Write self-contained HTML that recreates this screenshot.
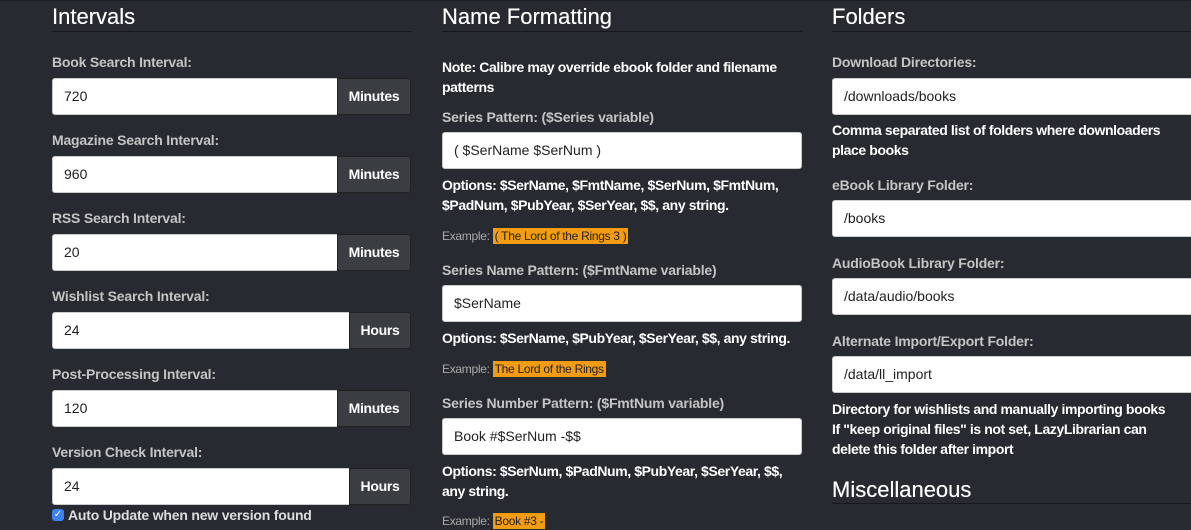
<!DOCTYPE html>
<html><head><style>
body{margin:0;width:1191px;height:526px;overflow:hidden;background:#272a30;font-family:"Liberation Sans",sans-serif;position:relative}
.a{position:absolute}
h2{position:absolute;margin:0;font-size:22px;font-weight:normal;color:#fff;line-height:24px;text-shadow:0 0 0.4px #fff}
.hr{position:absolute;height:1px;background:#16181b}
.l{position:absolute;font-size:14px;font-weight:bold;color:#c4c4c4;line-height:16px;white-space:nowrap;letter-spacing:-0.2px}
.t{position:absolute;font-size:14px;font-weight:bold;color:#fff;line-height:20px;letter-spacing:-0.4px}
.in{position:absolute;height:37px;background:#fff;border-radius:3px;border:1px solid #ccc;box-sizing:border-box;font-size:14px;color:#222;line-height:35px;padding-left:11px}
.ad{position:absolute;height:37px;background:#3a3d42;border:1px solid #222;box-sizing:border-box;border-radius:0 3px 3px 0;color:#fff;font-size:14px;font-weight:bold;line-height:35px;text-align:center;letter-spacing:-0.3px}
.ex{position:absolute;font-size:12px;color:#aaa;line-height:18px;white-space:nowrap;letter-spacing:-0.3px}
.ex span{background:#f39c12;color:#222;padding:1px 2px}
</style></head><body>
<div class="hr" style="left:0;top:0;width:1191px;background:#1c1e22"></div>
<h2 style="left:52px;top:5px">Intervals</h2><div class="hr" style="left:52px;top:31px;width:360px"></div>
<h2 style="left:442px;top:5px">Name Formatting</h2><div class="hr" style="left:442px;top:31px;width:360px"></div>
<h2 style="left:832px;top:5px">Folders</h2><div class="hr" style="left:832px;top:31px;width:359px"></div>

<div class="l" style="left:52px;top:54px">Book Search Interval:</div>
<div class="in" style="left:52px;top:78px;width:286px;border-radius:3px 0 0 3px">720</div><div class="ad" style="left:337px;top:78px;width:74px">Minutes</div>
<div class="l" style="left:52px;top:132px">Magazine Search Interval:</div>
<div class="in" style="left:52px;top:156px;width:286px;border-radius:3px 0 0 3px">960</div><div class="ad" style="left:337px;top:156px;width:74px">Minutes</div>
<div class="l" style="left:52px;top:210px">RSS Search Interval:</div>
<div class="in" style="left:52px;top:234px;width:286px;border-radius:3px 0 0 3px">20</div><div class="ad" style="left:337px;top:234px;width:74px">Minutes</div>
<div class="l" style="left:52px;top:288px">Wishlist Search Interval:</div>
<div class="in" style="left:52px;top:312px;width:298px;border-radius:3px 0 0 3px">24</div><div class="ad" style="left:349px;top:312px;width:62px">Hours</div>
<div class="l" style="left:52px;top:366px">Post-Processing Interval:</div>
<div class="in" style="left:52px;top:390px;width:286px;border-radius:3px 0 0 3px">120</div><div class="ad" style="left:337px;top:390px;width:74px">Minutes</div>
<div class="l" style="left:52px;top:444px">Version Check Interval:</div>
<div class="in" style="left:52px;top:468px;width:298px;border-radius:3px 0 0 3px">24</div><div class="ad" style="left:349px;top:468px;width:62px">Hours</div>
<div class="a" style="left:52px;top:509px;width:12px;height:12px;background:#3b82f6;border-radius:3px;color:#fff;font-size:10px;line-height:12px;text-align:center">✓</div>
<div class="l" style="left:68px;top:507px;color:#ddd">Auto Update when new version found</div>

<div class="t" style="left:442px;top:57px;width:360px">Note: Calibre may override ebook folder and filename patterns</div>
<div class="l" style="left:442px;top:109px">Series Pattern: ($Series variable)</div>
<div class="in" style="left:442px;top:132px;width:360px">( $SerName $SerNum )</div>
<div class="t" style="left:442px;top:175px;width:360px">Options: $SerName, $FmtName, $SerNum, $FmtNum, $PadNum, $PubYear, $SerYear, $$, any string.</div>
<div class="ex" style="left:442px;top:227px">Example: <span>( The Lord of the Rings 3 )</span></div>
<div class="l" style="left:442px;top:262px">Series Name Pattern: ($FmtName variable)</div>
<div class="in" style="left:442px;top:285px;width:360px">$SerName</div>
<div class="t" style="left:442px;top:328px;width:370px">Options: $SerName, $PubYear, $SerYear, $$, any string.</div>
<div class="ex" style="left:442px;top:360px">Example: <span>The Lord of the Rings</span></div>
<div class="l" style="left:442px;top:395px">Series Number Pattern: ($FmtNum variable)</div>
<div class="in" style="left:442px;top:418px;width:360px">Book #$SerNum -$$</div>
<div class="t" style="left:442px;top:461px;width:360px">Options: $SerNum, $PadNum, $PubYear, $SerYear, $$, any string.</div>
<div class="ex" style="left:442px;top:512px">Example: <span>Book #3 -</span></div>

<div class="l" style="left:832px;top:54px">Download Directories:</div>
<div class="in" style="left:832px;top:78px;width:370px">/downloads/books</div>
<div class="t" style="left:832px;top:120px;width:350px">Comma separated list of folders where downloaders place books</div>
<div class="l" style="left:832px;top:177px">eBook Library Folder:</div>
<div class="in" style="left:832px;top:200px;width:370px">/books</div>
<div class="l" style="left:832px;top:255px">AudioBook Library Folder:</div>
<div class="in" style="left:832px;top:278px;width:370px">/data/audio/books</div>
<div class="l" style="left:832px;top:333px">Alternate Import/Export Folder:</div>
<div class="in" style="left:832px;top:356px;width:370px">/data/ll_import</div>
<div class="t" style="left:832px;top:399px;width:345px">Directory for wishlists and manually importing books<br>If "keep original files" is not set, LazyLibrarian can delete this folder after import</div>
<h2 style="left:832px;top:478px">Miscellaneous</h2><div class="hr" style="left:832px;top:503px;width:359px"></div>
</body></html>
